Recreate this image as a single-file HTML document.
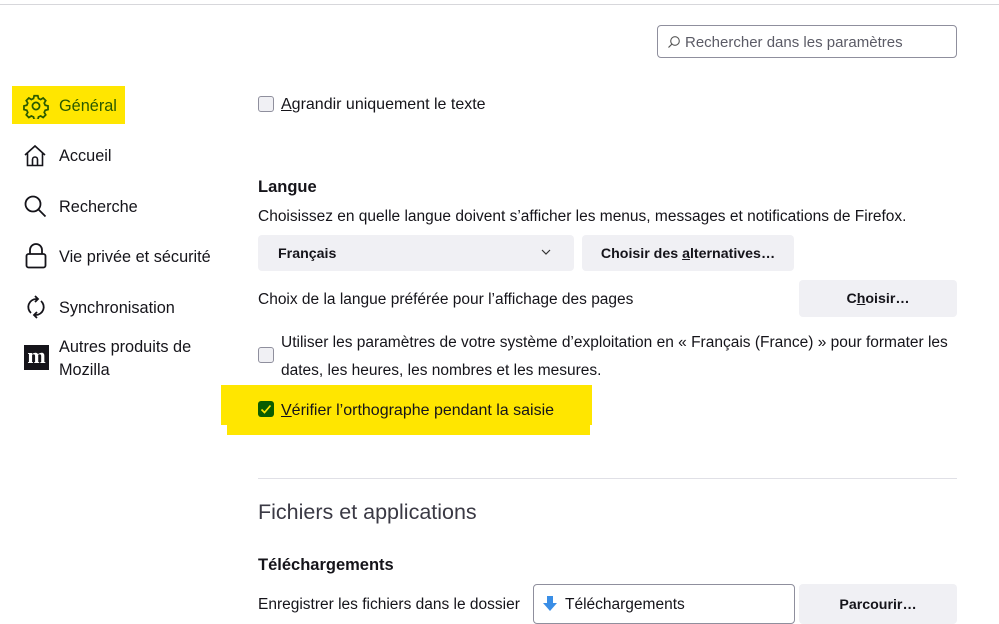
<!DOCTYPE html>
<html><head><meta charset="utf-8"><style>
*{margin:0;padding:0;box-sizing:border-box}
body{width:999px;height:610px;overflow:hidden;background:#fff;font-family:"Liberation Sans",sans-serif;color:#15141a;font-size:15.5px;position:relative}
.a{position:absolute;white-space:nowrap}
.top{position:absolute;left:0;top:0;width:999px;height:5px;border-bottom:1px solid #d7d7db;background:#fff}
.nav{font-size:16.3px}
.cb{position:absolute;width:16px;height:16px;border:1px solid #8f8f9d;border-radius:3px;background:#f0f0f4}
.btn{position:absolute;background:#f0f0f4;border-radius:4px;font-weight:bold;font-size:14.2px;text-align:center}
u{text-decoration:underline}
</style></head><body>
<div class="top"></div>
<div class="a" style="left:657px;top:25px;width:300px;height:33px;border:1px solid #8f8f9d;border-radius:4px"></div>
<svg class="a" style="left:667px;top:35px" width="14" height="14" viewBox="0 0 14 14"><circle cx="8" cy="6" r="4.3" fill="none" stroke="#555" stroke-width="1.1"/><path d="M5 9 1.5 12.5" stroke="#555" stroke-width="1.2"/></svg>
<div class="a" style="left:685px;top:34px;color:#5b5b66;font-size:15px">Rechercher dans les paramètres</div>

<div class="a" style="left:12px;top:86px;width:113px;height:38px;background:#ffe600"></div>
<svg class="a" style="left:23px;top:93px" width="26" height="26" viewBox="0 0 24 24" fill="none" stroke="#2a5a00" stroke-width="1.6"><circle cx="12" cy="12" r="3.3"/><path d="M10.3 2.5h3.4l.6 2.6 2 .9 2.3-1.4 2.4 2.4-1.4 2.3.9 2 2.6.6v3.4l-2.6.6-.9 2 1.4 2.3-2.4 2.4-2.3-1.4-2 .9-.6 2.6h-3.4l-.6-2.6-2-.9-2.3 1.4-2.4-2.4 1.4-2.3-.9-2-2.6-.6v-3.4l2.6-.6.9-2-1.4-2.3 2.4-2.4 2.3 1.4 2-.9z"/></svg>
<div class="a nav" style="left:59px;top:97px;color:#2a5a00">Général</div>

<svg class="a" style="left:23px;top:144px" width="24" height="24" viewBox="0 0 24 24" fill="none" stroke="#15141a" stroke-width="1.6"><path d="M2 11 12 2l10 9M4.5 9v12.5h15V9M9.5 21.5v-6a2.5 2.5 0 0 1 5 0v6"/></svg>
<div class="a nav" style="left:59px;top:147px">Accueil</div>
<svg class="a" style="left:23px;top:194px" width="24" height="24" viewBox="0 0 24 24" fill="none" stroke="#15141a" stroke-width="1.8"><circle cx="10" cy="10" r="7.5"/><path d="M15.5 15.5l7 7"/></svg>
<div class="a nav" style="left:59px;top:198px">Recherche</div>
<svg class="a" style="left:25px;top:243px" width="22" height="26" viewBox="0 0 22 26" fill="none" stroke="#15141a" stroke-width="1.8"><path d="M5 11V7a6 6 0 0 1 12 0v4"/><rect x="1.5" y="11" width="19" height="13.5" rx="2"/></svg>
<div class="a nav" style="left:59px;top:248px">Vie privée et sécurité</div>
<svg class="a" style="left:24px;top:295px" width="24" height="24" viewBox="0 0 24 24" fill="none" stroke="#15141a" stroke-width="1.8"><path d="M7 18A8 8 0 0 1 12 4h2M17 6a8 8 0 0 1-5 14h-2"/><path d="M11 1l3 3-3 3M13 17l-3 3 3 3"/></svg>
<div class="a nav" style="left:59px;top:299px">Synchronisation</div>
<div class="a" style="left:24px;top:345px;width:25px;height:25px;background:#15141a;color:#fff;font-family:'Liberation Serif',serif;font-weight:bold;font-size:22px;line-height:22px;text-align:center">m</div>
<div class="a nav" style="left:59px;top:338px">Autres produits de</div>
<div class="a nav" style="left:59px;top:361px">Mozilla</div>

<div class="cb" style="left:258px;top:96px"></div>
<div class="a" style="left:281px;top:96px;font-size:16px"><u>A</u>grandir uniquement le texte</div>
<div class="a" style="left:258px;top:178px;font-size:16.5px;font-weight:bold">Langue</div>
<div class="a" style="left:258px;top:208px">Choisissez en quelle langue doivent s’afficher les menus, messages et notifications de Firefox.</div>
<div class="btn" style="left:258px;top:235px;width:316px;height:36px;text-align:left;padding:11px 20px">Français</div>
<svg class="a" style="left:541px;top:249px" width="10" height="7" viewBox="0 0 10 7"><path d="M1 1l4 4 4-4" fill="none" stroke="#333" stroke-width="1.2"/></svg>
<div class="btn" style="left:582px;top:235px;width:212px;height:36px;padding-top:11px">Choisir des <u>a</u>lternatives…</div>
<div class="a" style="left:258px;top:291px">Choix de la langue préférée pour l’affichage des pages</div>
<div class="btn" style="left:799px;top:280px;width:158px;height:37px;padding-top:11px">C<u>h</u>oisir…</div>
<div class="cb" style="left:258px;top:347px"></div>
<div class="a" style="left:281px;top:334px">Utiliser les paramètres de votre système d’exploitation en « Français (France) » pour formater les</div>
<div class="a" style="left:281px;top:362px">dates, les heures, les nombres et les mesures.</div>

<div class="a" style="left:221px;top:385px;width:371px;height:40px;background:#ffe600"></div>
<div class="a" style="left:227px;top:420px;width:363px;height:15px;background:#ffe600"></div>
<div class="a" style="left:258px;top:401px;width:16px;height:16px;background:#0a5c00;border-radius:3px"></div>
<svg class="a" style="left:258px;top:401px" width="16" height="16" viewBox="0 0 16 16"><path d="M3.5 8.5l3 3 6-7" fill="none" stroke="#ffe600" stroke-width="1.7"/></svg>
<div class="a" style="left:281px;top:402px;font-size:16px"><u>V</u>érifier l’orthographe pendant la saisie</div>

<div class="a" style="left:258px;top:478px;width:699px;height:1px;background:#e0e0e6"></div>
<div class="a" style="left:258px;top:500px;font-size:21.5px;color:#3a3944">Fichiers et applications</div>
<div class="a" style="left:258px;top:556px;font-size:16.5px;font-weight:bold">Téléchargements</div>
<div class="a" style="left:258px;top:596px">Enregistrer les fichiers dans le dossier</div>
<div class="a" style="left:533px;top:584px;width:262px;height:40px;border:1px solid #8f8f9d;border-radius:4px"></div>
<svg class="a" style="left:543px;top:596px" width="14" height="16" viewBox="0 0 14 16"><path d="M4 0h6v7h4l-7 8-7-8h4z" fill="#3a8ee6"/></svg>
<div class="a" style="left:565px;top:596px">Téléchargements</div>
<div class="btn" style="left:799px;top:584px;width:158px;height:40px;padding-top:13px">Parcourir…</div>
</body></html>
